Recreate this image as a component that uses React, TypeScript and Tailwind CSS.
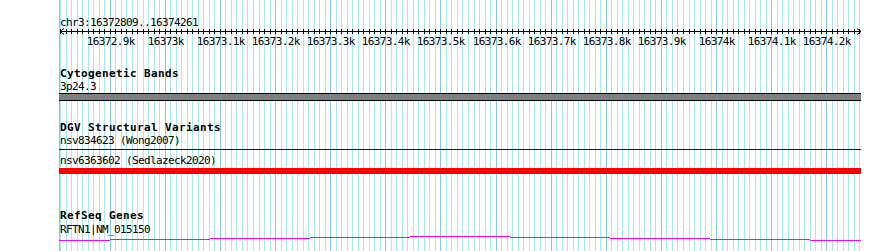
import React from "react";

const START = 16372809;
const END = 16374261;
const X0 = 59.5;
const SCALE = 801 / (END - START + 1);

const toX = (pos: number) => Math.round(X0 + (pos - START) * SCALE);

const minorTicks: number[] = [];
for (let p = Math.ceil(START / 10) * 10; p <= END; p += 10) minorTicks.push(p);
const majorTicks = minorTicks.filter((p) => p % 100 === 0);

// steps of the gene line (x start, x end, y row)
const geneSteps: [number, number, number][] = [
  [59, 110, 6],
  [110, 210, 5],
  [210, 310, 4],
  [310, 410, 3],
  [410, 510, 2],
  [510, 610, 3],
  [610, 710, 4],
  [710, 810, 5],
  [810, 861, 6],
];

function GridLines() {
  return (
    <svg
      className="absolute inset-0"
      width={890}
      height={251}
      shapeRendering="crispEdges"
    >
      {minorTicks.map((p) => (
        <rect
          key={p}
          x={toX(p)}
          y={0}
          width={1}
          height={251}
          fill={p % 100 === 0 ? "#88c8ec" : "#a6eaea"}
        />
      ))}
      <rect x={59} y={0} width={1} height={251} fill="#88c8ec" />
    </svg>
  );
}

function Ruler() {
  return (
    <svg
      width={802}
      height={21}
      className="block font-['DejaVu_Sans_Mono',monospace]"
      shapeRendering="crispEdges"
    >
      <g transform="translate(-59,-27)">
        <rect x={60} y={31} width={801} height={1} fill="#000" />
        {minorTicks.map((p) => (
          <rect key={p} x={toX(p)} y={29} width={1} height={5} fill="#000" />
        ))}
        <path d="M60 31.5 L64 28.5 M60 31.5 L64 34.5" stroke="#000" strokeWidth={1} fill="none" shapeRendering="auto" />
        <path d="M861 31.5 L857 28.5 M861 31.5 L857 34.5" stroke="#000" strokeWidth={1} fill="none" shapeRendering="auto" />
        {majorTicks.map((p) => (
          <text
            key={p}
            x={toX(p) + 0.8}
            y={45}
            textAnchor="middle"
            fontSize={11}
            letterSpacing={-0.62}
            fill="#000"
          >
            {p / 1000 + "k"}
          </text>
        ))}
      </g>
    </svg>
  );
}

export default function App() {
  const label = "pl-px h-[9px] leading-[9px] text-[11px] tracking-[-0.62px] text-black whitespace-nowrap";
  const title = "pl-px h-[12px] leading-[12px] text-[11px] font-bold tracking-[0.38px] text-black whitespace-nowrap";

  return (
    <div className="relative w-[890px] h-[251px] overflow-hidden bg-white font-['DejaVu_Sans_Mono',monospace]">
      <GridLines />
      <div className="relative flex flex-col ml-[59px] w-[802px]">
        <div className={`${label} mt-[18px]`}>chr3:16372809..16374261</div>
        <Ruler />

        <div className={`${title} mt-[20px]`}>Cytogenetic Bands</div>
        <div className={`${label} mt-[2px]`}>3p24.3</div>
        <div className="mt-[2px] h-[8px] border-y border-black bg-[#808080]" />

        <div className={`${title} mt-[21px]`}>DGV Structural Variants</div>
        <div className={`${label} mt-[2px]`}>nsv834623 (Wong2007)</div>
        <div className="mt-[4px] h-px bg-[#0000cc]" />
        <div className={`${label} mt-[6px]`}>nsv6363602 (Sedlazeck2020)</div>
        <div className="mt-[3px] h-[6px] bg-[#ff0000]" />

        <div className={`${title} mt-[36px]`}>RefSeq Genes</div>
        <div className={`${label} mt-[3px]`}>RFTN1|NM_015150</div>
        <svg width={802} height={8} className="block" shapeRendering="crispEdges">
          {geneSteps.map(([a, b, y]) => (
            <rect key={a} x={a - 59} y={y} width={b - a} height={1} fill="#ff00ff" />
          ))}
        </svg>
      </div>
    </div>
  );
}
